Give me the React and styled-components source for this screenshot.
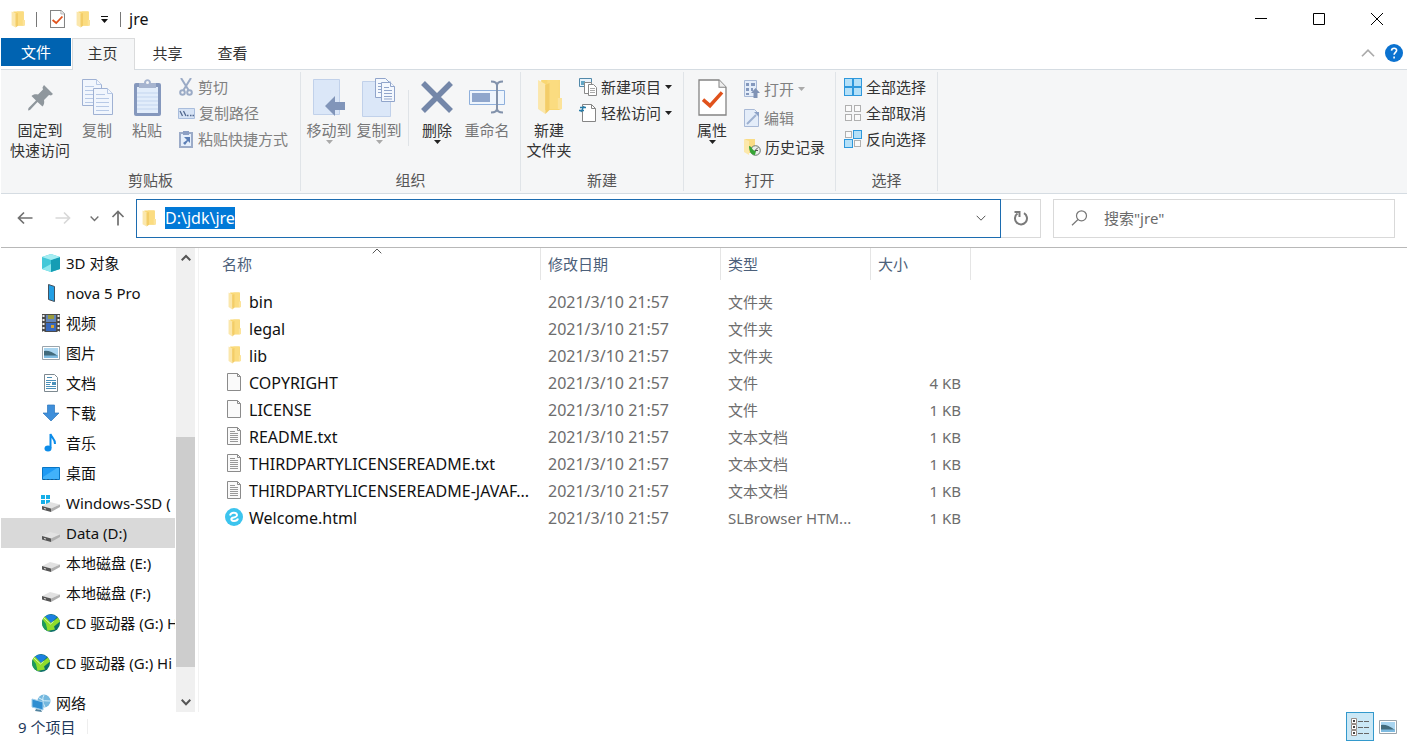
import React, { useEffect, useRef } from "react";
import styled, { createGlobalStyle } from "styled-components";

const GlobalStyle = createGlobalStyle`
  * { box-sizing: border-box; }
  body {
    margin: 0;
    background: #fff;
    color: #111;
    font: 15px/20px "Noto Sans", "Noto Sans CJK SC", sans-serif;
  }
  button, input { font: inherit; color: inherit; }
  button { border: 0; background: none; padding: 0; }
  svg { display: block; flex: none; }
`;

const Window = styled.div`
  display: flex;
  flex-direction: column;
  height: 100vh;
  padding: 0 1px;
  overflow: hidden;
`;

const TitleBar = styled.header`
  display: flex;
  align-items: center;
  height: 38px;
  padding: 0 1px 0 10px;
`;
const QuickAccess = styled.div`
  display: flex;
  align-items: center;
  gap: 10px;
`;
const Rule = styled.span`
  width: 1px;
  height: ${(p) => p.$height || 15}px;
  background: ${(p) => p.$color || "#777"};
`;
const TitleRule = styled(Rule)`
  margin: 0 1px;
`;
const IconButton = styled.button`
  display: flex;
  align-items: center;
  justify-content: center;
  width: ${(p) => p.$width || 16}px;
  height: ${(p) => p.$height || 20}px;
`;
const WindowTitle = styled.h1`
  margin: 0 auto 0 7px;
  font-size: 16px;
  font-weight: 400;
`;

const Tabs = styled.nav`
  display: flex;
  height: 31px;
  padding-right: 3px;
`;
const Tab = styled.button`
  width: 65px;
  height: 31px;
  padding-bottom: 2px;
  color: #333;
`;
const FileTab = styled(Tab)`
  width: 70px;
  height: 28px;
  margin-right: 1px;
  padding-bottom: 0;
  background: #0063b1;
  color: #fff;
`;
const ActiveTab = styled(Tab)`
  width: 63px;
  height: 32px;
  padding: 0 2px 3px 0;
  background: #f5f6f7;
  border: 1px solid #dadbdc;
  border-width: 1px 1px 0 1px;
  position: relative;
`;
const TabTools = styled.div`
  display: flex;
  align-items: center;
  gap: 8px;
  margin-left: auto;
  padding-bottom: 2px;
`;

const Ribbon = styled.section`
  display: flex;
  height: 125px;
  padding: 2px 0;
  background: #f5f6f7;
  border-top: 1px solid #d5dce2;
  border-bottom: 1px solid #d5dce2;
`;
const Group = styled.div`
  display: flex;
  flex-direction: column;
  padding: 2px 0 1px;
  border-right: 1px solid #e0e4e8;
`;
const GroupBody = styled.div`
  display: flex;
  flex: 1;
  padding: 0 ${(p) => p.$right || 8}px 0 ${(p) => p.$left || 3}px;
`;
const GroupLabel = styled.div`
  text-align: center;
  color: #555;
`;
const BigButton = styled.button`
  display: flex;
  flex-direction: column;
  align-items: center;
  width: ${(p) => p.$width || 50}px;
  padding-top: 3px;
  color: ${(p) => (p.$muted ? "#777" : "#333")};
`;
const BigIcon = styled.span`
  display: flex;
  align-items: center;
  justify-content: center;
  height: 40px;
  margin-bottom: 3px;
`;
const Column = styled.div`
  display: flex;
  flex-direction: column;
  padding-left: ${(p) => p.$left || 5}px;
`;
const SmallButton = styled.button`
  display: flex;
  align-items: center;
  gap: 4px;
  height: ${(p) => (p.$tall ? 29 : 26)}px;
  white-space: nowrap;
  color: ${(p) => (p.$muted ? "#808080" : "#333")};
`;
const Divider = styled(Rule)`
  margin: 16px 3px 0 4px;
`;

const AddressRow = styled.div`
  display: flex;
  align-items: center;
  height: 54px;
  padding: 0 12px 5px 11px;
  border-bottom: 1px solid #b8b8b8;
`;
const NavButtons = styled.div`
  display: flex;
  align-items: center;
  width: 124px;
`;
const AddressBox = styled.div`
  display: flex;
  align-items: center;
  flex: 1;
  height: 39px;
  padding: 0 11px 0 5px;
  border: 1px solid #1c6cb0;
`;
const AddressInput = styled.input`
  flex: 1;
  min-width: 0;
  height: 22px;
  margin-left: 9px;
  padding: 0;
  border: 0;
  outline: 0;
  background: none;
  font-size: 16px;
  &::selection { background: rgba(0, 120, 215, 0.996); color: #fff; }
`;
const RefreshButton = styled(IconButton)`
  width: 40px;
  height: 39px;
  border: 1px solid #d9d9d9;
  border-left: 0;
`;
const SearchBox = styled.label`
  display: flex;
  align-items: center;
  gap: 16px;
  width: 342px;
  height: 39px;
  margin-left: 12px;
  padding: 0 17px;
  border: 1px solid #d9d9d9;
`;
const SearchInput = styled.input`
  flex: 1;
  min-width: 0;
  padding: 0;
  border: 0;
  outline: 0;
  &::placeholder { color: #6b6b6b; opacity: 1; }
`;

const Body = styled.main`
  display: flex;
  flex: 1;
  min-height: 0;
`;
const Tree = styled.nav`
  width: 174px;
  overflow: hidden;
`;
const TreeItem = styled.a`
  display: flex;
  align-items: center;
  gap: 5px;
  height: 30px;
  margin-top: ${(p) => (p.$root ? 10 : 0)}px;
  padding-left: ${(p) => (p.$root ? 30 : 40)}px;
  background: ${(p) => (p.$selected ? "#d9d9d9" : "none")};
  color: #111;
  text-decoration: none;
  white-space: nowrap;
`;
const ScrollBar = styled.div`
  display: flex;
  flex-direction: column;
  width: 19px;
  margin-left: 1px;
  background: #f0f0f0;
`;
const ScrollSpace = styled.div`
  flex: ${(p) => p.$share};
`;
const ScrollThumb = styled.div`
  flex: 230;
  background: #cdcdcd;
`;
const FileArea = styled.section`
  flex: 1;
  margin-left: 3px;
  border-left: 1px solid #f2f2f2;
`;
const FileTable = styled.table`
  table-layout: fixed;
  width: 772px;
  border-collapse: separate;
  border-spacing: 0;
`;
const HeadCell = styled.th`
  position: relative;
  width: ${(p) => p.$width}px;
  height: 32px;
  padding: 0 0 0 ${(p) => p.$left || 7}px;
  border-right: 1px solid #e5e5e5;
  text-align: left;
  font-weight: 400;
  color: #4c607a;
`;
const SortMark = styled.span`
  position: absolute;
  top: -2px;
  left: 0;
  right: 0;
  display: flex;
  justify-content: center;
  padding-left: 14px;
`;
const FileRows = styled.tbody`
  &::before { content: ""; display: block; height: 8px; }
`;
const Cell = styled.td`
  height: 27px;
  padding: 0 10px 0 7px;
  color: #6d6d6d;
  white-space: nowrap;
  text-align: ${(p) => p.$align || "left"};
`;
const DateCell = styled(Cell)`
  font-size: 16px;
`;
const FileName = styled.div`
  display: flex;
  align-items: center;
  gap: 6px;
  padding-left: 19px;
  color: #111;
  font-size: 16px;
`;
const FileIcon = styled.span`
  display: flex;
  justify-content: center;
  width: 18px;
  height: 20px;
`;

const StatusBar = styled.footer`
  display: flex;
  align-items: center;
  height: 30px;
  padding: 0 5px 1px 17px;
  color: #1e395b;
`;
const ViewButton = styled(IconButton)`
  width: 28px;
  height: 29px;
  border: ${(p) => (p.$on ? "1px solid #3399cc" : "0")};
  background: ${(p) => (p.$on ? "#cbe8f6" : "none")};
`;
const StatusRule = styled(Rule)`
  margin: 0 auto 0 12px;
`;

/* ---- icons ---- */
const Folder = ({ w = 13, h = 17 }) => (
  <svg width={w} height={h} viewBox="0 0 24 36" preserveAspectRatio="none">
    <path d="M4 1h18v18h2v11l-3 1H4z" fill="#f9d772" />
    <path d="M10 1h11v29H10z" fill="#fbdc80" />
    <path d="M1 1l7 4v30l-7-5z" fill="#fbe7ac" />
    <path d="M8 6v29l4-4V4z" fill="#f3cd68" />
    <path d="M20 19h4v11h-4z" fill="#fce39a" />
  </svg>
);
const CheckPage = ({ w = 15, h = 18 }) => (
  <svg width={w} height={h} viewBox="0 0 29 36" preserveAspectRatio="none">
    <path d="M1 1h20l7 7v27H1z" fill="#fff" stroke="#848484" strokeWidth={w < 20 ? 2 : 1.3} />
    <path d="M21 1v7h7" fill="#eee" stroke="#848484" />
    <path d="M5 20l7 6L24 13" fill="none" stroke="#e0521c" strokeWidth="3.5" />
  </svg>
);
const Down = ({ color = "#222" }) => (
  <svg width="7" height="4" viewBox="0 0 7 4"><path d="M0 0h7L3.5 4z" fill={color} /></svg>
);
const Chevron = ({ up, size = 10, color = "#555", weight = 1.5 }) => (
  <svg width={size} height={size} viewBox="0 0 10 10">
    <path d={up ? "M.7 7.3L5 3l4.300 4.300" : "M.7 2.800L5 7.200l4.300-4.400"} fill="none" stroke={color} strokeWidth={weight} />
  </svg>
);
const Customize = () => (
  <svg width="7" height="7" viewBox="0 0 7 7"><path d="M0 0h7v1H0zM0 3h7L3.500 7z" fill="#111" /></svg>
);
const Minimize = () => (
  <svg width="12" height="12" viewBox="0 0 12 12"><path d="M0 5.500h12" stroke="#000" /></svg>
);
const Maximize = () => (
  <svg width="12" height="12" viewBox="0 0 12 12"><path d="M.5.5h11v11H.5z" fill="none" stroke="#000" /></svg>
);
const Close = () => (
  <svg width="12" height="12" viewBox="0 0 12 12"><path d="M0 0l12 12M12 0L0 12" stroke="#000" /></svg>
);
const Help = () => (
  <svg width="18" height="18" viewBox="0 0 18 18">
    <circle cx="9" cy="9" r="9" fill="#0b72d0" />
    <path d="M6.500 6.600c.2-3.200 5.400-3 5.100 0-.2 1.700-2.500 1.900-2.500 4.200M9.100 12.500v2" fill="none" stroke="#fff" strokeWidth="1.600" />
  </svg>
);
const Pin = () => (
  <svg width="27" height="27" viewBox="0 0 27 27">
    <path d="M17 1l9 9-2 1.500-2-.5-5 5c.6 3 0 5-1.500 6.500L10.500 18 3 26l-2 .5L1.500 24 9 16.500 4.500 12C6 10.500 8 10 11 10.500l5-5-.5-2z" fill="#8f979d" />
  </svg>
);
const CopyPages = () => (
  <svg width="31" height="37" viewBox="0 0 31 37" fill="#f1f6fd" stroke="#9fb1d3">
    <path d="M.5.5h14l5 5v21H.5z" />
    <path d="M14.500.5v5h5M3 7.500h9M3 11.500h13M3 15.500h8M3 19.500h8M3 23.500h8" stroke="#b7c9e6" />
    <path d="M11.500 9.500h14l5 5v21h-19z" />
    <path d="M25.500 9.500v5h5M14 15.500h9M14 19.500h13M14 23.500h13M14 27.500h13M14 31.500h13" stroke="#b7c9e6" />
  </svg>
);
const Clipboard = () => (
  <svg width="27" height="37" viewBox="0 0 27 37">
    <rect y="4" width="27" height="33" rx="2" fill="#8598bd" />
    <path d="M3 8h21v26H3z" fill="#e2edfb" />
    <path d="M3 14h21M3 18h21M3 22h21M3 26h21M3 30h21" stroke="#c3d5ef" />
    <path d="M5 4h5c0-5 7-5 7 0h5v5H5z" fill="#a6b4cf" />
    <circle cx="13.500" cy="3.500" r="1.500" fill="#f5f6f7" />
  </svg>
);
const Scissors = () => (
  <svg width="16" height="18" viewBox="0 0 16 18" fill="none" stroke="#9babc6">
    <path d="M3 0l7.500 12M13 0L5.500 12" strokeWidth="2" />
    <circle cx="4.500" cy="14.500" r="2.300" strokeWidth="2" /><circle cx="11.500" cy="14.500" r="2.300" strokeWidth="2" />
  </svg>
);
const PathIcon = () => (
  <svg width="17" height="11" viewBox="0 0 17 11">
    <path d="M.5.5h16v10H.5z" fill="#d6e3f5" stroke="#a9bddc" />
    <path d="M2 3l2.500 5M5.500 3L8 8M9 7.500h1.500M12 7.500h1.500M14.500 7.500H16" stroke="#52698f" strokeWidth="1.300" />
  </svg>
);
const PasteShortcut = () => (
  <svg width="16" height="18" viewBox="0 0 16 18">
    <path d="M2 3h12v14H2z" fill="#e6effb" stroke="#9babc8" strokeWidth="2" />
    <path d="M5 1h6v4H5z" fill="#8da0c4" />
    <path d="M6 7h6v6l-2-2-3 4-2-2 4-3z" fill="#5b7eb5" />
  </svg>
);
const MoveTo = () => (
  <svg width="33" height="37" viewBox="0 0 33 37">
    <path d="M.5.5h26v35H.5z" fill="#dbe7f8" stroke="#c1d1ea" />
    <path d="M12 27l10-10v6h10v8H22v6z" fill="#8195b9" />
  </svg>
);
const CopyTo = () => (
  <svg width="34" height="39" viewBox="0 0 34 39">
    <path d="M.5 3.500h28v35H.5z" fill="#dbe7f8" stroke="#c1d1ea" />
    <g fill="#f4f8fe" stroke="#91a5cb">
      <path d="M13.500.5h10l4 4v15h-14z" /><path d="M16 5.500h6M16 8.500h6M16 11.500h6M16 14.500h6" />
      <path d="M19.500 4.500h9l4 4v15h-13z" /><path d="M28.500 4.500v4h4M22 9.500h5M22 12.500h8M22 15.500h8M22 18.500h8M22 21h8" />
    </g>
  </svg>
);
const DeleteX = () => (
  <svg width="32" height="34" viewBox="0 0 32 34"><path d="M2 3l28 28M30 3L2 31" stroke="#7487a9" strokeWidth="5.500" /></svg>
);
const Rename = () => (
  <svg width="36" height="34" viewBox="0 0 36 34" fill="none">
    <path d="M.5 10.500h35v14H.5z" fill="#eef5fd" stroke="#8fb0dc" />
    <path d="M3 13h18v9H3z" fill="#8fa6cc" />
    <path d="M22 1.500c4 0 6 1 6 4v23c0 3-2 4-6 4M34 1.500c-4 0-6 1-6 4v23c0 3 2 4 6 4" stroke="#8292ab" strokeWidth="2" />
  </svg>
);
const NewItem = () => (
  <svg width="18" height="18" viewBox="0 0 18 18">
    <path d="M.5.5h12v8H.5z" fill="#e9f3fb" stroke="#5289aa" /><path d="M2 3h4v4H2z" fill="#62a6c5" />
    <path d="M5.500 4.500h7v11h-7z" fill="#fff" stroke="#898989" />
    <path d="M9.500 6.500h5l3 3v8h-8z" fill="#fff" stroke="#898989" /><path d="M11 10.500h5M11 12.500h5M11 14.500h5" stroke="#aaa" />
  </svg>
);
const EasyAccess = () => (
  <svg width="18" height="18" viewBox="0 0 18 18">
    <path d="M3.500.5h9l4 4v13h-13z" fill="#fff" stroke="#858585" /><path d="M12.500.5v4h4" fill="none" stroke="#858585" />
    <path d="M1 3.500h6M0 6.500h5M5 2L2 8" stroke="#277ca8" strokeWidth="1.300" />
  </svg>
);
const OpenIcon = () => (
  <svg width="16" height="18" viewBox="0 0 16 18">
    <path d="M.5.5h12v16H.5z" fill="#e4edf9" stroke="#a8b9d6" /><path d="M2 3h3v3H2zM2 8h3v3H2zM2 13h3v2H2zM7 3h4v3H7zM7 8h2v3H7z" fill="#8498bd" />
    <path d="M11.500 8l4.500 5h-2.500v5h-4v-5H7z" fill="#8093b5" />
  </svg>
);
const EditIcon = () => (
  <svg width="16" height="18" viewBox="0 0 16 18">
    <path d="M.5.5h10l4 4v13H.5z" fill="#e4edf9" stroke="#a8b9d6" />
    <path d="M3 15l9-9" stroke="#9db0d0" strokeWidth="2" /><path d="M10 3h5v5z" fill="#8ba1c6" />
  </svg>
);
const HistoryIcon = () => (
  <svg width="17" height="18" viewBox="0 0 17 18">
    <path d="M1 1h10v14H4z" fill="#f9dc85" /><path d="M0 1l5 2v14l-5-3z" fill="#fce8ac" />
    <circle cx="11.500" cy="12.500" r="4.800" fill="#e8eeea" stroke="#6a776e" /><path d="M5 8c3 0 3 5 7 5l-1 4c-4 0-6-4-6-9z" fill="#35a436" />
    <path d="M14 9.500l-3 3h3" fill="none" stroke="#555" />
  </svg>
);
const Squares = ({ on }) => (
  <svg width="18" height="18" viewBox="0 0 18 18">
    {[[0, 0], [9, 0], [0, 9], [9, 9]].map(([x, y], i) =>
      on.includes(i)
        ? <rect key={i} x={x + 0.5} y={y + 0.5} width="8" height="8" fill="#b4e0f8" stroke="#2e98dc" />
        : <rect key={i} x={x + 1.500} y={y + 1.500} width="6" height="6" fill="#fafafa" stroke="#b0b0b0" />
    )}
  </svg>
);
const Arrow = ({ color, turn = 0 }) => (
  <svg width="16" height="16" viewBox="0 0 16 16">
    <path transform={`rotate(${turn} 8 8)`} d="M15.500 8H1.500M7 2.500L1.500 8 7 13.500" fill="none" stroke={color} strokeWidth="1.700" />
  </svg>
);
const Refresh = () => (
  <svg width="16" height="16" viewBox="0 0 16 16" fill="none" stroke="#7a7a7a" strokeWidth="2">
    <path d="M11 3.200A6 6 0 1 1 4.500 3.500M1.500 2h5v5" />
  </svg>
);
const Search = () => (
  <svg width="17" height="16" viewBox="0 0 17 16" fill="none" stroke="#777" strokeWidth="1.200">
    <circle cx="10.500" cy="5.800" r="5" /><path d="M7 9.500L1 15.300" />
  </svg>
);

const TreeIcon = ({ children }) => <svg width="20" height="20" viewBox="0 0 20 20">{children}</svg>;
const drive = (
  <>
    <path d="M1 13l8-4 10 2.500-9 4z" fill="#e2e2e2" /><path d="M1 13l9 2.500v3.500l-9-2.500z" fill="#555" />
    <path d="M10 15.500l9-4V14l-9 5z" fill="#b0b0b0" /><path d="M3 15.500l2 .5" stroke="#ddd" />
  </>
);
const cd = (
  <>
    <circle cx="10" cy="10" r="9" fill="#0d6f68" />
    <path d="M4 3.500q6-4 12 .5l-6 6z" fill="#1b7fe0" />
    <path d="M1.500 6.500q1-2 2.500-3l6 6.500 7-5.500 2 4-6 5 1 3-8 1.500-1.500-7z" fill="#8fdc2c" />
    <path d="M1.500 6.500L5 11l1.500 7q-5-2-5.500-8z" fill="#1d9c5a" />
    <path d="M3 5l6.500 6 3-2.500" fill="none" stroke="#d8f7b0" />
  </>
);
const treeIcons = {
  cube: (<><path d="M10 1l9 3v12l-9 3-9-3V4z" fill="#42c8d8" /><path d="M10 7l9-3v12l-9 3z" fill="#169db4" /><path d="M1 4l9-3 9 3-9 3z" fill="#a5edf2" /><path d="M1 16l9-5v8z" fill="#8ce7ed" /></>),
  phone: (<path d="M7.500 1.500l6 2v15l-6-2z" fill="#239fe4" stroke="#45515d" />),
  video: (<><path d="M1 1h18v18H1z" fill="#4b4b4b" /><path d="M5 2h10v7H5z" fill="#6386ba" /><path d="M7 2h6v4H7z" fill="#999b3e" /><path d="M5 10h10v8H5z" fill="#3768bd" /><path d="M10 12h3v3h-3z" fill="#d8a52b" /><path d="M2.500 2v17M17.500 2v17" stroke="#eee" strokeWidth="2" strokeDasharray="2 2" /></>),
  picture: (<><path d="M1.500 3.500h17v13h-17z" fill="#fff" stroke="#9aa4ab" /><path d="M3 5h14v10H3z" fill="#a9d5f0" /><path d="M3 8q6-1 14 5v1H3z" fill="#426b7c" /><path d="M3 12.500h14V15H3z" fill="#7fbbe0" /></>),
  document: (<><path d="M3.500 1.500h10l3 3v14h-13z" fill="#fff" stroke="#7d8990" /><path d="M6 4.500h5M5 7.500h10M5 9.500h5M5 11.500h4M5 13.500h10M5 15.500h10" stroke="#4a90b9" /><path d="M11 9h4v3h-4z" fill="#4a90b9" /></>),
  download: (<path d="M6.500 2h7v8H18l-8 8-8-8h4.500z" fill="#3f8fda" stroke="#2b75bb" strokeWidth=".7" />),
  music: (<><ellipse cx="7" cy="15.500" rx="3.500" ry="3" fill="#0c8ce9" /><path d="M9.500 15V1c1 4 5 5 4.500 10" fill="none" stroke="#0c8ce9" strokeWidth="2" /></>),
  desktop: (<><path d="M1.500 4.500h17v12h-17z" fill="#1e9af4" stroke="#0876c5" /><path d="M2 14L16 5h2v11H2z" fill="#42b2fa" /><path d="M2 16.500h16" stroke="#175d91" strokeDasharray="2 2" /></>),
  windows: (<><path d="M0 2h4v4H0zM5 2h4v4H5zM0 7h4v4H0zM5 7h4v4H5z" fill="#17afe8" />{drive}</>),
  drive,
  cd,
  network: (<><circle cx="13" cy="8" r="6.500" fill="#75b8de" /><path d="M8 5q5 4 11 3M13 2q-3 5 1 12" fill="none" stroke="#d5effb" /><path d="M1 6l11 3v8L1 14z" fill="#2f8ed1" stroke="#9ccdec" /><path d="M5 16l5 1 1 2-7-1z" fill="#51839f" /></>),
};

const Sheet = ({ lines }) => (
  <svg width="16" height="18" viewBox="0 0 16 18">
    <path d="M1.500.5h10l3 3v14h-13z" fill="#fafafa" stroke="#8b8b8b" /><path d="M11.500.5v3h3" fill="none" stroke="#8b8b8b" />
    {lines && <path d="M4 4.500h5M4 6.500h8M4 8.500h8M4 10.500h8M4 12.500h8M4 14.500h8" stroke="#999" />}
  </svg>
);
const Browser = () => (
  <svg width="18" height="18" viewBox="0 0 18 18">
    <circle cx="9" cy="9" r="9" fill="#3cc4ee" />
    <path d="M5 7.500C6 4 11.500 4 12 7c.3 2-3 2.500-5 3-1.500 1-.5 3 2 3 2 0 3.500-.8 4-2.500" fill="none" stroke="#fff" strokeWidth="2" />
  </svg>
);
const fileIcons = { folder: <Folder w={13} h={18} />, sheet: <Sheet />, text: <Sheet lines />, web: <Browser /> };

const files = [
  ["folder", "bin", "文件夹", ""],
  ["folder", "legal", "文件夹", ""],
  ["folder", "lib", "文件夹", ""],
  ["sheet", "COPYRIGHT", "文件", "4 KB"],
  ["sheet", "LICENSE", "文件", "1 KB"],
  ["text", "README.txt", "文本文档", "1 KB"],
  ["text", "THIRDPARTYLICENSEREADME.txt", "文本文档", "1 KB"],
  ["text", "THIRDPARTYLICENSEREADME-JAVAF...", "文本文档", "1 KB"],
  ["web", "Welcome.html", "SLBrowser HTM...", "1 KB"],
];
const places = [
  ["cube", "3D 对象"], ["phone", "nova 5 Pro"], ["video", "视频"], ["picture", "图片"],
  ["document", "文档"], ["download", "下载"], ["music", "音乐"], ["desktop", "桌面"],
  ["windows", "Windows-SSD ("], ["drive", "Data (D:)"], ["drive", "本地磁盘 (E:)"],
  ["drive", "本地磁盘 (F:)"], ["cd", "CD 驱动器 (G:) H"],
  ["cd", "CD 驱动器 (G:) Hi", true], ["network", "网络", true],
];

function Big({ icon, lines, muted, menu, width }) {
  return (
    <BigButton $muted={muted} $width={width}>
      <BigIcon>{icon}</BigIcon>
      {lines.map((l) => <span key={l}>{l}</span>)}
      {menu && <Down color={muted ? "#aaa" : "#222"} />}
    </BigButton>
  );
}
function Small({ icon, children, muted, menu, tall }) {
  return (
    <SmallButton $muted={muted} $tall={tall}>
      {icon}<span>{children}</span>
      {menu && <Down color={muted ? "#aaa" : "#222"} />}
    </SmallButton>
  );
}

export default function App() {
  const address = useRef(null);
  useEffect(() => {
    address.current.focus();
    address.current.select();
  }, []);
  return (
    <Window>
      <GlobalStyle />
      <TitleBar>
        <QuickAccess>
          <Folder w={14} h={17} />
          <TitleRule />
          <IconButton $width={18} aria-label="属性"><CheckPage /></IconButton>
          <IconButton $width={14} aria-label="新建文件夹"><Folder w={14} h={17} /></IconButton>
          <IconButton $width={9} aria-label="自定义"><Customize /></IconButton>
          <TitleRule />
        </QuickAccess>
        <WindowTitle>jre</WindowTitle>
        <IconButton $width={58} $height={38} aria-label="最小化"><Minimize /></IconButton>
        <IconButton $width={58} $height={38} aria-label="最大化"><Maximize /></IconButton>
        <IconButton $width={58} $height={38} aria-label="关闭"><Close /></IconButton>
      </TitleBar>
      <Tabs>
        <FileTab>文件</FileTab>
        <ActiveTab>主页</ActiveTab>
        <Tab>共享</Tab>
        <Tab>查看</Tab>
        <TabTools>
          <IconButton aria-label="折叠功能区"><Chevron up size={14} color="#aaa" weight={1.2} /></IconButton>
          <IconButton $width={20} aria-label="帮助"><Help /></IconButton>
        </TabTools>
      </Tabs>
      <Ribbon>
        <Group>
          <GroupBody $left={7} $right={12}>
            <Big icon={<Pin />} lines={["固定到", "快速访问"]} width={64} />
            <Big icon={<CopyPages />} lines={["复制"]} muted />
            <Big icon={<Clipboard />} lines={["粘贴"]} muted />
            <Column $left={6}>
              <Small icon={<Scissors />} muted>剪切</Small>
              <Small icon={<PathIcon />} muted>复制路径</Small>
              <Small icon={<PasteShortcut />} muted>粘贴快捷方式</Small>
            </Column>
          </GroupBody>
          <GroupLabel>剪贴板</GroupLabel>
        </Group>
        <Group>
          <GroupBody>
            <Big icon={<MoveTo />} lines={["移动到"]} muted menu />
            <Big icon={<CopyTo />} lines={["复制到"]} muted menu />
            <Divider $height={56} $color="#dfe3e7" />
            <Big icon={<DeleteX />} lines={["删除"]} menu />
            <Big icon={<Rename />} lines={["重命名"]} muted />
          </GroupBody>
          <GroupLabel>组织</GroupLabel>
        </Group>
        <Group>
          <GroupBody $right={11}>
            <Big icon={<Folder w={25} h={36} />} lines={["新建", "文件夹"]} />
            <Column>
              <Small icon={<NewItem />} menu>新建项目</Small>
              <Small icon={<EasyAccess />} menu>轻松访问</Small>
            </Column>
          </GroupBody>
          <GroupLabel>新建</GroupLabel>
        </Group>
        <Group>
          <GroupBody $right={10}>
            <Big icon={<CheckPage w={29} h={37} />} lines={["属性"]} menu />
            <Column $left={7}>
              <Small icon={<OpenIcon />} muted menu tall>打开</Small>
              <Small icon={<EditIcon />} muted tall>编辑</Small>
              <Small icon={<HistoryIcon />} tall>历史记录</Small>
            </Column>
          </GroupBody>
          <GroupLabel>打开</GroupLabel>
        </Group>
        <Group>
          <GroupBody $right={11}>
            <Column>
              <Small icon={<Squares on={[0, 1, 2, 3]} />}>全部选择</Small>
              <Small icon={<Squares on={[]} />}>全部取消</Small>
              <Small icon={<Squares on={[1, 2]} />}>反向选择</Small>
            </Column>
          </GroupBody>
          <GroupLabel>选择</GroupLabel>
        </Group>
      </Ribbon>
      <AddressRow>
        <NavButtons>
          <IconButton $width={26} aria-label="后退"><Arrow color="#707070" /></IconButton>
          <IconButton $width={50} aria-label="前进"><Arrow color="#d8d8d8" turn={180} /></IconButton>
          <IconButton $width={12} aria-label="最近位置"><Chevron size={9} color="#707070" /></IconButton>
          <IconButton $width={36} aria-label="上移"><Arrow color="#707070" turn={90} /></IconButton>
        </NavButtons>
        <AddressBox>
          <Folder w={14} h={17} />
          <AddressInput ref={address} aria-label="地址" defaultValue="D:\jdk\jre" />
          <IconButton aria-label="展开地址"><Chevron weight={1} /></IconButton>
        </AddressBox>
        <RefreshButton aria-label="刷新"><Refresh /></RefreshButton>
        <SearchBox>
          <Search />
          <SearchInput aria-label="搜索" placeholder={'搜索"jre"'} />
        </SearchBox>
      </AddressRow>
      <Body>
        <Tree>
          {places.map(([icon, name, root], i) => (
            <TreeItem key={i} href="#" $root={root} $selected={name === "Data (D:)"}>
              <TreeIcon>{treeIcons[icon]}</TreeIcon>{name}
            </TreeItem>
          ))}
        </Tree>
        <ScrollBar>
          <IconButton $width={19} aria-label="向上滚动"><Chevron up weight={2} /></IconButton>
          <ScrollSpace $share={169} />
          <ScrollThumb />
          <ScrollSpace $share={25} />
          <IconButton $width={19} aria-label="向下滚动"><Chevron weight={2} /></IconButton>
        </ScrollBar>
        <FileArea>
          <FileTable>
            <thead>
              <tr>
                <HeadCell $width={342} $left={23}>名称<SortMark><Chevron up weight={1} /></SortMark></HeadCell>
                <HeadCell $width={180}>修改日期</HeadCell>
                <HeadCell $width={150}>类型</HeadCell>
                <HeadCell $width={100}>大小</HeadCell>
              </tr>
            </thead>
            <FileRows>
              {files.map(([icon, name, type, size]) => (
                <tr key={name}>
                  <Cell><FileName><FileIcon>{fileIcons[icon]}</FileIcon>{name}</FileName></Cell>
                  <DateCell>2021/3/10 21:57</DateCell>
                  <Cell>{type}</Cell>
                  <Cell $align="right">{size}</Cell>
                </tr>
              ))}
            </FileRows>
          </FileTable>
        </FileArea>
      </Body>
      <StatusBar>
        <span>9 个项目</span>
        <StatusRule $color="#eee" />
        <ViewButton $on aria-label="详细信息">
          <svg width="20" height="18" viewBox="0 0 20 18">
            <path d="M1.500.5h5v5h-5zM1.500 6.500h5v5h-5zM1.500 12.500h5v5h-5z" fill="#fff" stroke="#978d87" />
            <path d="M3 2h2v2H3zM3 8h2v2H3zM3 14h2v2H3z" fill="#444" />
            <path d="M8 3.500h5M14 3.500h5M8 9.500h5M14 9.500h5M8 15.500h5M14 15.500h5" stroke="#666" />
          </svg>
        </ViewButton>
        <ViewButton aria-label="大图标"><TreeIcon>{treeIcons.picture}</TreeIcon></ViewButton>
      </StatusBar>
    </Window>
  );
}
